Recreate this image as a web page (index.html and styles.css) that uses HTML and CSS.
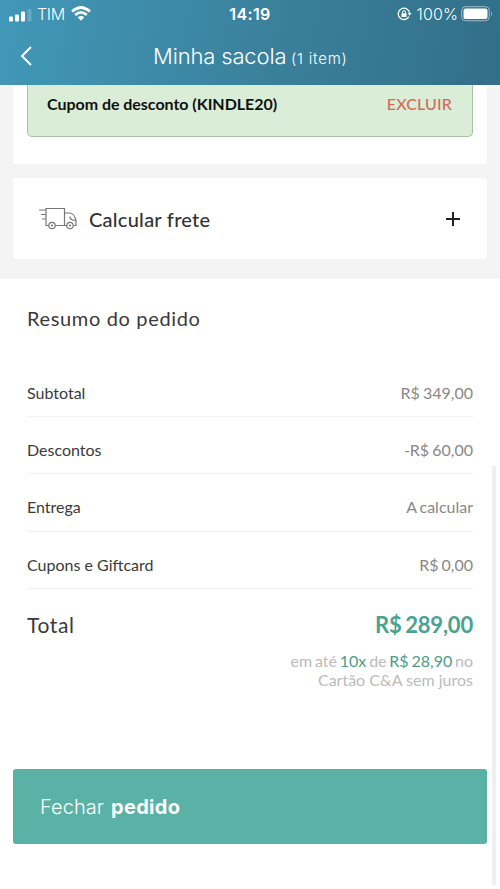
FILE: index.html
```html
<!DOCTYPE html>
<html lang="pt-BR">
<head>
<meta charset="utf-8">
<meta name="viewport" content="width=device-width, initial-scale=1">
<title>Minha sacola</title>
<link rel="stylesheet" href="styles.css">
</head>
<body>
<header class="header">
  <div class="status">
    <div class="status-left">
      <svg class="signal" width="23" height="14" viewBox="0 0 23 14" fill="#fff"><rect x="0" y="8.500" width="4" height="5" rx="1"/><rect x="6" y="6.500" width="4" height="7" rx="1"/><rect x="12" y="3.500" width="4" height="10" rx="1"/><rect x="18.500" y="1" width="4" height="12.500" rx="1" opacity=".2"/></svg>
      <span class="carrier">TIM</span>
      <svg class="wifi" width="20" height="15" viewBox="0 0 20 15" fill="none" stroke="#fff" stroke-width="2.700"><path d="M1 5.600Q10-2.600 19 5.600M4.200 9Q10 3.800 15.800 9"/><path d="M6.700 11.300Q10 8.300 13.300 11.300L10 14.700Z" fill="#fff" stroke="none"/></svg>
    </div>
    <time class="clock">14:19</time>
    <div class="status-right">
      <svg class="lock" width="15" height="14" viewBox="0 0 15 14" fill="none" stroke="#fff" stroke-width="1.300"><path d="M11.900 9.700A5.700 5.700 0 1 1 12.600 6"/><path d="M10.700 6h3.900l-2 2.700z" fill="#fff" stroke="none"/><rect x="4.500" y="6.200" width="5" height="3.800" rx=".5" fill="#fff" stroke="none"/><path d="M5.500 6.500V5.200a1.500 1.500 0 0 1 3 0v1.300" stroke-width="1"/></svg>
      <span class="percent">100%</span>
      <svg class="battery" width="32" height="16" viewBox="0 0 32 16"><rect x=".7" y=".7" width="27.600" height="14" rx="3.800" fill="none" stroke="#fff" stroke-opacity=".5"/><rect x="2.500" y="2.500" width="24" height="10.400" rx="2" fill="#fff"/><path d="M30 5.500q2 2.300 0 4.600z" fill="#fff" opacity=".5"/></svg>
    </div>
  </div>
  <div class="nav">
    <svg class="back" width="12" height="20" viewBox="0 0 12 20" fill="none" stroke="#fff" stroke-width="2"><path d="M11 1 2 10l9 9"/></svg>
    <h1 class="title">Minha sacola</h1><span class="count">(1 item)</span>
  </div>
</header>
<main>
  <section class="options">
    <div class="card coupon-card">
      <div class="coupon"><strong class="coupon-name">Cupom de desconto (KINDLE20)</strong><span class="remove">EXCLUIR</span></div>
    </div>
    <div class="card shipping">
      <svg class="truck" width="39" height="24" viewBox="0 0 39 24" fill="none" stroke="#777" stroke-width="1.200"><path d="M0 3h7M2 7.500h5M3 12h4M7 18V1.500h18.500V18M7 13v5.500h3M16 18.500h12M26 6h4.500c4 0 6 5 6.500 7.500v5h-2.500M31 9.500c0 3 2 4 6 4"/><circle cx="13" cy="18.500" r="3.200"/><circle cx="31" cy="18.500" r="3.200"/><circle cx="13" cy="18.500" r=".5"/><circle cx="31" cy="18.500" r=".5"/></svg>
      <h2 class="shipping-title">Calcular frete</h2>
      <svg class="plus" width="14" height="14" viewBox="0 0 14 14" stroke="#222" stroke-width="2"><path d="M7 0v14M0 7h14"/></svg>
    </div>
  </section>
  <section class="summary">
    <h2 class="summary-title">Resumo do pedido</h2>
    <div class="row first"><span class="label">Subtotal</span><span class="value">R$ 349,00</span></div>
    <div class="row"><span class="label">Descontos</span><span class="value">-R$ 60,00</span></div>
    <div class="row"><span class="label">Entrega</span><span class="value">A calcular</span></div>
    <div class="row"><span class="label">Cupons e Giftcard</span><span class="value">R$ 0,00</span></div>
    <div class="total"><span class="total-label">Total</span><strong class="total-value">R$ 289,00</strong></div>
    <p class="installments"><span class="terms">em até <b>10x</b> de <b>R$ 28,90</b> no</span><br>Cartão C&amp;A sem juros</p>
  </section>
  <button class="checkout"><span class="close">Fechar</span><b class="order">pedido</b></button>
</main>
<div class="scrollbar"></div>
</body>
</html>
```
FILE: styles.css
```css
* { box-sizing: border-box; }
body { margin: 0; height: 889px; overflow: hidden; position: relative; background: #fff; color: #3a3a3a; font-family: Lato, sans-serif; }
h1, h2, p { margin: 0; font-weight: 400; }
svg { display: block; flex: none; }
span, strong, h1, h2, time { white-space: nowrap; }

.header { height: 85px; background: linear-gradient(100deg, #4198b8 0%, #3a809b 55%, #326f89 100%); color: #fff; font-family: Inter, sans-serif; }
.status { height: 28px; display: grid; grid-template-columns: 1fr auto 1fr; align-items: center; padding: 0 7px 0 9px; }
.status-left, .status-right { display: flex; align-items: center; }
.status-right { justify-content: flex-end; }
.signal { margin: 1px 5px 0 0; }
.carrier { font-size: 16px; font-weight: 300; letter-spacing: -.3px; }
.wifi { margin-left: 6px; margin-top: -2px; }
.clock { font-size: 16px; font-weight: 600; letter-spacing: .4px; margin-left: -2px; }
.lock { margin-right: 5px; }
.percent { font-size: 16px; font-weight: 300; letter-spacing: .1px; }
.battery { margin-left: 3px; margin-top: -1px; }
.nav { height: 57px; display: flex; align-items: baseline; padding: 0 20px; }
.back { align-self: flex-start; margin-top: 18px; }
.title { width: 138px; margin-left: 121px; font-size: 22px; font-weight: 300; line-height: 57px; letter-spacing: -.15px; }
.count { font-size: 15px; font-weight: 300; letter-spacing: .8px; }

.options { height: 194px; background: #f4f4f4; padding: 0 13px; }
.card { background: #fff; border-radius: 3px; }
.coupon-card { height: 79px; padding: 0 14px; border-radius: 0 0 3px 3px; }
.coupon { height: 52px; display: flex; justify-content: space-between; padding: 8px 20px 0 19px; background: #daedd6; border: 1px solid #a5c3a3; border-top: 0; border-radius: 0 0 5px 5px; line-height: 22px; }
.coupon-name { color: #111; font-size: 16px; font-weight: 700; letter-spacing: -.03px; }
.remove { color: #d26c58; font-size: 16px; font-weight: 500; letter-spacing: .15px; }
.shipping { height: 81px; margin-top: 14px; display: flex; align-items: center; padding: 0 27px 0 26px; }
.shipping-title { margin-left: 11px; font-size: 20px; font-weight: 500; letter-spacing: .25px; color: #333; }
.plus { margin-left: auto; }

.summary { height: 490px; padding: 22px 27px 0; }
.summary-title { height: 64px; font-size: 20px; line-height: 34px; letter-spacing: .65px; }
.row { height: 57.300px; padding-top: 25px; display: flex; justify-content: space-between; border-bottom: 1px solid #f2f2f2; font-size: 16px; line-height: 16px; }
.row.first { height: 52px; padding-top: 20px; }
.value { color: #888; word-spacing: -1px; }
.total { display: flex; justify-content: space-between; align-items: center; height: 75px; padding-bottom: 3px; }
.total-label { font-size: 21px; letter-spacing: .65px; }
.total-value { color: #4aa28f; font-size: 22px; font-weight: 700; letter-spacing: -.2px; word-spacing: -1.500px; }
.installments { color: #bbb; text-align: right; font-size: 16px; line-height: 19px; margin-top: -13px; }
.terms { word-spacing: -1.300px; }
.installments b { color: #4c9c87; font-weight: 400; }
.checkout { width: 474px; height: 75px; margin: 0 13px; display: flex; align-items: center; gap: 7px; padding: 0 27px; border: 0; border-radius: 3px; background: #5ab1a5; color: #fff; font-size: 20px; font-family: Inter, sans-serif; }
.close { font-weight: 300; letter-spacing: .05px; }
.order { font-weight: 700; letter-spacing: .3px; }
.scrollbar { position: absolute; left: 492px; top: 466px; width: 4px; height: 419px; background: #f0f0f0; }
```
